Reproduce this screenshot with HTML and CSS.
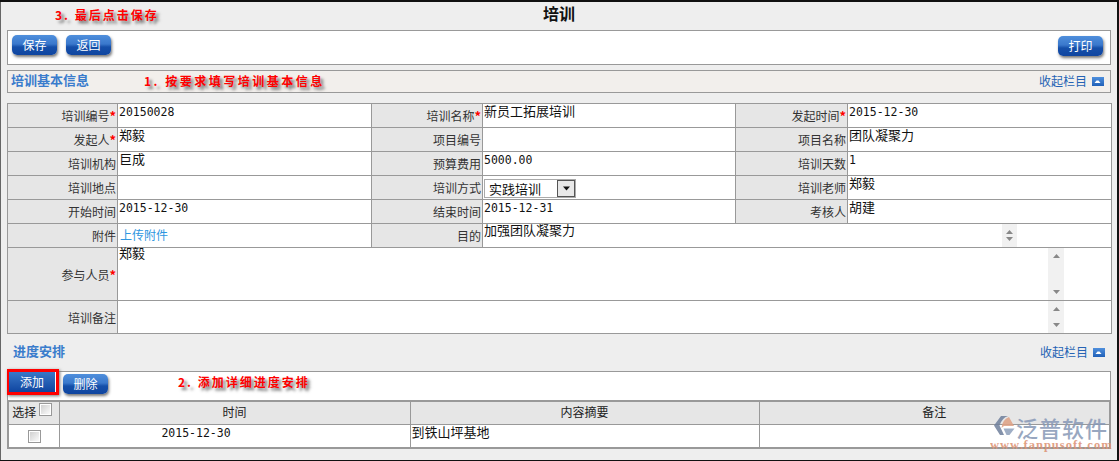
FILE: index.html
```html
<!DOCTYPE html>
<html lang="zh">
<head>
<meta charset="utf-8">
<title>培训</title>
<link rel="stylesheet" href="styles.css">
</head>
<body>
<div class="frame">
  <header class="titlebar">
    <span class="note note-save">3. 最后点击保存</span>
    <h1 class="title">培训</h1>
  </header>
  <div class="toolbar">
    <button class="btn">保存</button>
    <button class="btn">返回</button>
    <button class="btn btn-print">打印</button>
  </div>
  <div class="section section-basic">
    <span class="section-name">培训基本信息</span>
    <span class="note note-fill">1. 按要求填写培训基本信息</span>
    <a class="collapse">收起栏目<i class="collapse-icon"><svg width="11" height="9" viewBox="0 0 11 9"><path d="M2.5 6 L4.5 3.5 H6.5 L8.5 6 Z" fill="#fff"/></svg></i></a>
  </div>
  <table class="form">
    <colgroup><col class="c-l1"><col class="c-v1"><col class="c-l2"><col class="c-v2"><col class="c-l3"><col class="c-v3"></colgroup>
    <tr class="row">
      <th>培训编号<em>*</em></th><td><span class="num">20150028</span></td>
      <th>培训名称<em>*</em></th><td>新员工拓展培训</td>
      <th>发起时间<em>*</em></th><td><span class="num">2015-12-30</span></td>
    </tr>
    <tr class="row">
      <th>发起人<em>*</em></th><td>郑毅</td>
      <th>项目编号</th><td></td>
      <th>项目名称</th><td>团队凝聚力</td>
    </tr>
    <tr class="row">
      <th>培训机构</th><td>巨成</td>
      <th>预算费用</th><td><span class="num">5000.00</span></td>
      <th>培训天数</th><td><span class="num">1</span></td>
    </tr>
    <tr class="row">
      <th>培训地点</th><td></td>
      <th>培训方式</th>
      <td class="cell-select"><div class="select"><span class="select-text">实践培训</span><span class="select-btn"><svg width="9" height="5" viewBox="0 0 9 5"><path d="M1 0.5 H8 L4.5 4.5 Z" fill="#111"/></svg></span></div></td>
      <th>培训老师</th><td>郑毅</td>
    </tr>
    <tr class="row">
      <th>开始时间</th><td><span class="num">2015-12-30</span></td>
      <th>结束时间</th><td><span class="num">2015-12-31</span></td>
      <th>考核人</th><td>胡建</td>
    </tr>
    <tr class="row">
      <th>附件</th><td><a class="upload">上传附件</a></td>
      <th>目的</th>
      <td colspan="3" class="cell-area">
        <div class="area area-purpose">
          <div class="area-text">加强团队凝聚力</div>
          <div class="scroll"><svg width="7" height="4" viewBox="0 0 7 4"><path d="M3.5 0 L7 4 H0 Z"/></svg><svg width="7" height="4" viewBox="0 0 7 4"><path d="M0 0 H7 L3.5 4 Z"/></svg></div>
        </div>
      </td>
    </tr>
    <tr class="row-tall">
      <th>参与人员<em>*</em></th>
      <td colspan="5" class="cell-area">
        <div class="area area-wide">
          <div class="area-text">郑毅</div>
          <div class="scroll"><svg width="7" height="4" viewBox="0 0 7 4"><path d="M3.5 0 L7 4 H0 Z"/></svg><svg width="7" height="4" viewBox="0 0 7 4"><path d="M0 0 H7 L3.5 4 Z"/></svg></div>
        </div>
      </td>
    </tr>
    <tr class="row-mid">
      <th>培训备注</th>
      <td colspan="5" class="cell-area">
        <div class="area area-wide">
          <div class="area-text"></div>
          <div class="scroll"><svg width="7" height="4" viewBox="0 0 7 4"><path d="M3.5 0 L7 4 H0 Z"/></svg><svg width="7" height="4" viewBox="0 0 7 4"><path d="M0 0 H7 L3.5 4 Z"/></svg></div>
        </div>
      </td>
    </tr>
  </table>
  <div class="section section-plan">
    <span class="section-name">进度安排</span>
    <a class="collapse">收起栏目<i class="collapse-icon"><svg width="11" height="9" viewBox="0 0 11 9"><path d="M2.5 6 L4.5 3.5 H6.5 L8.5 6 Z" fill="#fff"/></svg></i></a>
  </div>
  <div class="plan-box">
    <div class="plan-tools">
      <span class="highlight"><button class="btn btn-add">添加</button></span>
      <button class="btn btn-del">删除</button>
      <span class="note note-add">2. 添加详细进度安排</span>
    </div>
    <table class="plan">
      <colgroup><col class="p-c1"><col class="p-c2"><col class="p-c3"><col class="p-c4"></colgroup>
      <tr class="plan-head">
        <th>选择<span class="check check-head"></span></th><th>时间</th><th>内容摘要</th><th>备注</th>
      </tr>
      <tr class="plan-row">
        <td class="cell-check"><span class="check"></span></td>
        <td class="cell-time"><span class="num">2015-12-30</span></td>
        <td>到铁山坪基地</td>
        <td></td>
      </tr>
    </table>
  </div>
  <div class="logo">
    <div class="logo-top">
      <svg class="logo-mark" width="21" height="19" viewBox="0 0 21 19">
        <path d="M7 0 H14 Q8 2 5.5 9.5 L10 19 H6 L0 9.5 Z" fill="#6f7f9c"/>
        <path d="M15 1 L20 10 H10 L7.5 12 Q8 4 15 1 Z" fill="#e0a184"/>
        <path d="M9.5 12.5 H20.5 L15.5 19 H12.5 Z" fill="#8fa0bc"/>
      </svg>
      <span class="logo-name">泛普软件</span>
    </div>
    <div class="logo-url">www.fanpusoft.com</div>
  </div>
</div>
</body>
</html>
```
FILE: styles.css
```css
* { box-sizing: border-box; }
html, body { margin: 0; padding: 0; }
body {
  width: 1119px;
  height: 461px;
  overflow: hidden;
  background: #111;
  font-family: "Noto Sans CJK SC", "Liberation Sans", sans-serif;
  font-size: 13px;
  color: #111;
}
.frame {
  position: relative;
  width: 1117px;
  height: 458px;
  margin-top: 2px;
  padding: 0 6px 0 6px;
  background: #eee;
  border-left: 1px solid #666;
  overflow: hidden;
}
.titlebar {
  position: relative;
  height: 28px;
  display: flex;
  justify-content: center;
  align-items: center;
}
.title { margin: 0 0 7px 0; font-size: 16px; line-height: 20px; font-weight: 700; color: #111; }
.note {
  position: absolute;
  font-size: 12px;
  line-height: 14px;
  font-weight: 700;
  color: #f00;
  text-shadow: 3px 3px 3px #777;
  white-space: nowrap;
}
.note-save { left: 48px; top: 6px; letter-spacing: 2px; }
.note-fill { left: 136px; top: 3px; letter-spacing: 2.5px; }
.note-add { left: 170px; top: 3px; letter-spacing: 2px; }
.toolbar {
  height: 35px;
  border: 1px solid #999;
  background: #fff;
  display: flex;
  align-items: flex-start;
  padding: 4px 7px 0 4px;
  gap: 9px;
}
.btn {
  width: 45px;
  height: 20px;
  padding: 0;
  border: 0;
  border-radius: 5px;
  background: linear-gradient(#4f8fdc, #3a78cc 45%, #154fa9 60%, #0f45a0);
  color: #fff;
  font-family: inherit;
  font-size: 12px;
  line-height: 20px;
  box-shadow: 1px 2px 3px #777;
}
.btn-print { margin-left: auto; margin-top: 1px; }
.section {
  position: relative;
  height: 23px;
  display: flex;
  align-items: center;
  justify-content: space-between;
}
.section-basic {
  margin-top: 5px;
  border: 1px solid #999;
  background: #f2efec;
  padding: 0 6px 0 3px;
}
.section-name { font-weight: 700; color: #3a7ccc; font-size: 13px; line-height: 16px; margin-top: -3px; }
.collapse { display: flex; align-items: center; color: #2563b4; font-size: 12px; line-height: 16px; margin-top: -1px; }
.collapse-icon {
  display: block;
  width: 12px;
  height: 9px;
  margin-left: 5px;
  background: linear-gradient(#4f8fdc, #2060b8);
}
.collapse-icon svg { display: block; }
.form {
  width: 1104px;
  margin-top: 10px;
  border-collapse: collapse;
  table-layout: fixed;
  background: #fff;
}
.c-l1 { width: 110px; }
.c-v1 { width: 254px; }
.c-l2 { width: 111px; }
.c-v2 { width: 253px; }
.c-l3 { width: 112px; }
.c-v3 { width: 264px; }
.form th, .form td { border: 1px solid #999; padding: 0; vertical-align: top; }
.form th {
  background: #e6e6e6;
  color: #333;
  font-size: 12px;
  font-weight: 400;
  text-align: right;
  vertical-align: middle;
  line-height: 18px;
  padding: 1px 1px 0 0;
}
.form em { color: #f00; font-style: normal; font-weight: 700; font-size: 13px; }
.form td { padding-left: 1px; line-height: 14px; }
.row { height: 24px; }
.row-tall { height: 53px; }
.row-mid { height: 33px; }
.num { font-family: "DejaVu Sans Mono", monospace; font-size: 11.5px; }
.upload { color: #2e96e0; font-size: 12px; line-height: 22px; display: block; padding-left: 1px; }
.cell-select { padding-top: 3px !important; }
.select {
  width: 92px;
  height: 19px;
  border: 1px solid #aaa;
  display: flex;
  justify-content: space-between;
  align-items: center;
  padding-left: 4px;
}
.select-text { line-height: 15px; }
.select-btn {
  width: 18px;
  height: 17px;
  background: #e8e8e8;
  border: 1px solid #555;
  display: flex;
  align-items: center;
  justify-content: center;
}
.select-btn svg { display: block; }
.cell-area { height: 1px; }
.area { display: flex; height: 100%; align-items: stretch; }
.area-text { flex: 1; margin-top: -1px; }
.scroll {
  width: 15px;
  background: #f1f1f1;
  display: flex;
  flex-direction: column;
  justify-content: space-between;
  align-items: center;
  padding: 6px 0;
}
.scroll svg { display: block; fill: #888; }
.area-purpose { padding-right: 94px; }
.area-wide { padding-right: 47px; }
.area-wide .scroll { width: 16px; }
.area-wide .area-text { margin-top: -2px; }
.section-plan {
  height: 37px;
  padding: 9px 6px 0 6px;
  align-items: flex-start;
}
.section-plan .section-name { margin-top: 0; }
.section-plan .collapse { margin-top: 1px; }
.plan-box {
  position: relative;
  height: 78px;
  border-top: 1px solid #999;
  border-right: 1px solid #999;
  background: #fff;
}
.plan-tools {
  height: 28px;
  border-left: 1px solid #999;
  display: flex;
  align-items: flex-start;
  position: relative;
  padding: 2px 0 0 2px;
}
.highlight {
  display: block;
  position: absolute;
  left: -1px;
  top: -3px;
  width: 52px;
  height: 26px;
  border: 3px solid #f00;
  box-shadow: 1px 1px 3px #777;
}
.btn-add {
  position: absolute;
  left: -1px;
  top: 0;
  border-radius: 0;
  width: 46px;
  height: 20px;
  background: linear-gradient(#3a78c8, #0f45a0);
  box-shadow: none;
}
.btn-del { margin-left: 53px; }
.plan {
  width: 1102px;
  border-collapse: collapse;
  table-layout: fixed;
  border: 2px solid #999;
  background: #fff;
}
.p-c1 { width: 51px; }
.p-c2 { width: 351px; }
.p-c3 { width: 349px; }
.p-c4 { width: 351px; }
.plan th, .plan td { border: 1px solid #999; padding: 0; }
.plan-head { height: 23px; }
.plan-row { height: 24px; }
.plan th { background: #e6e6e6; font-size: 12px; font-weight: 400; color: #222; line-height: 16px; padding-bottom: 2px; }
.plan-head th:first-child { padding-right: 3px; }
.plan td { vertical-align: top; line-height: 14px; padding-left: 1px; }
.cell-time { text-align: center; padding-right: 78px !important; }
.cell-check { text-align: center; vertical-align: middle !important; }
.check {
  display: inline-block;
  width: 13px;
  height: 13px;
  border: 1px solid #999;
  background: linear-gradient(135deg, #ccc, #fff);
  box-shadow: inset 0 0 0 1px #fff;
  vertical-align: -2px;
}
.check-head { vertical-align: 1px; margin-left: 3px; }
.logo {
  position: absolute;
  left: 989px;
  top: 414px;
  width: 122px;
  opacity: .85;
}
.logo-top { display: flex; align-items: flex-start; height: 24px; }
.logo-mark { flex: none; margin: 0 1px 0 4px; }
.logo-name {
  font-size: 22px;
  line-height: 22px;
  font-weight: 500;
  color: #8798b6;
  letter-spacing: 1px;
  white-space: nowrap;
}
.logo-url {
  font-family: "Liberation Serif", serif;
  font-weight: 700;
  font-size: 12.5px;
  line-height: 10px;
  letter-spacing: 1px;
  color: #dc9172;
  white-space: nowrap;
}
```
